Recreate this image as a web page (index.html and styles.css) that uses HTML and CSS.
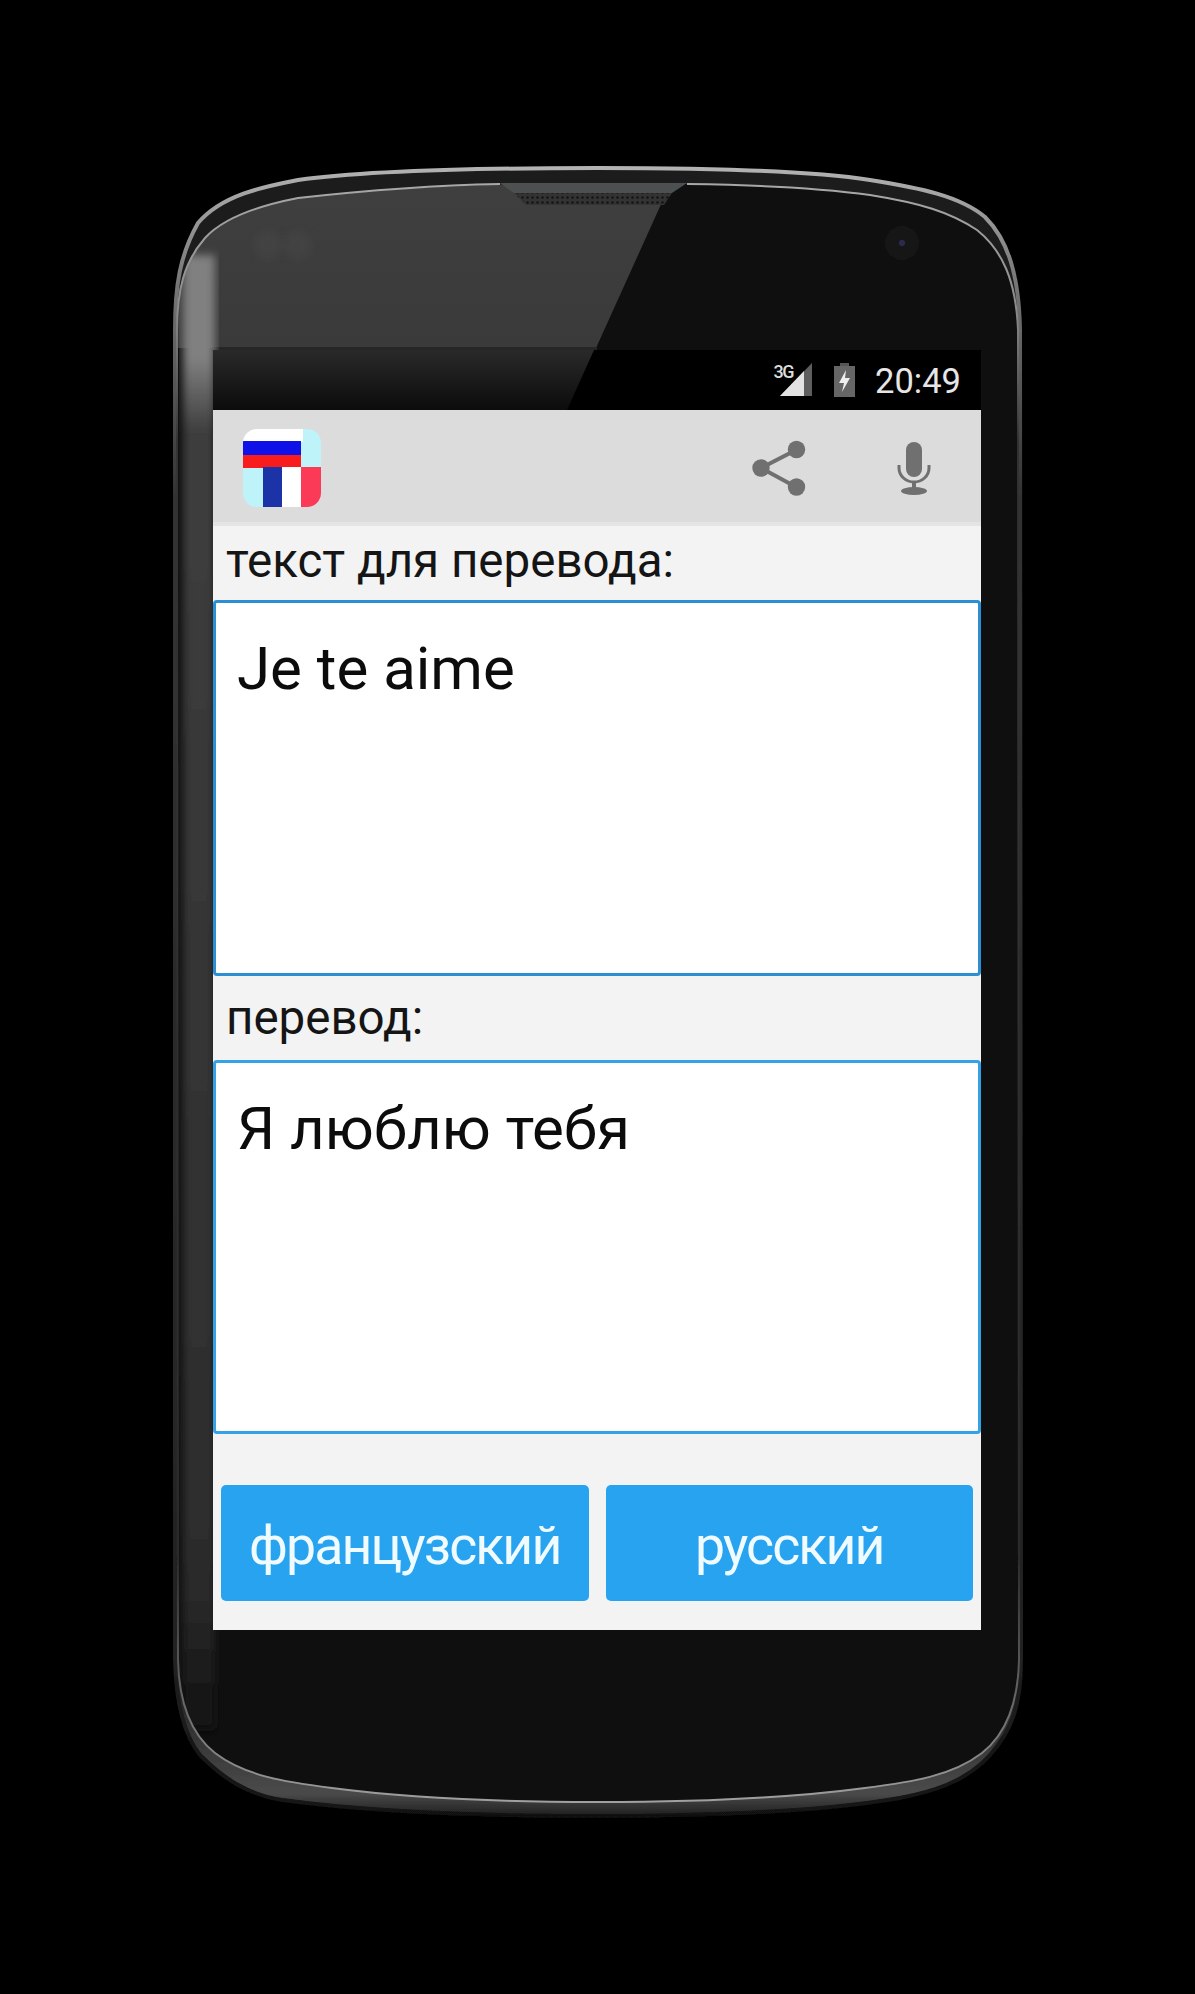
FILE: index.html
```html
<!DOCTYPE html>
<html lang="ru">
<head>
    <meta charset="UTF-8">
    <meta name="viewport" content="width=device-width, initial-scale=1.0">
    <title>Переводчик</title>
    <link rel="stylesheet" href="styles.css">
</head>
<body>
    <div class="phone">
        <!-- phone body, drawn behind the screen -->
        <svg class="phone-body" viewBox="0 0 1195 1994" width="1195" height="1994">
            <defs>
                <linearGradient id="bandFill" gradientUnits="userSpaceOnUse" x1="0" y1="165" x2="0" y2="1818">
                    <stop offset="0" stop-color="#1d1d1d"/>
                    <stop offset="0.9" stop-color="#161616"/>
                    <stop offset="0.985" stop-color="#4a4a4a"/>
                    <stop offset="1" stop-color="#1c1c1c"/>
                </linearGradient>
                <linearGradient id="edgeStroke" gradientUnits="userSpaceOnUse" x1="0" y1="165" x2="0" y2="1818">
                    <stop offset="0" stop-color="#b4b4b4"/>
                    <stop offset="0.07" stop-color="#777"/>
                    <stop offset="0.2" stop-color="#333"/>
                    <stop offset="0.9" stop-color="#222"/>
                    <stop offset="1" stop-color="#111"/>
                </linearGradient>
                <linearGradient id="glassStroke" gradientUnits="userSpaceOnUse" x1="0" y1="183" x2="0" y2="1802">
                    <stop offset="0" stop-color="#a8a8a8"/>
                    <stop offset="0.08" stop-color="#8a8a8a"/>
                    <stop offset="0.16" stop-color="#333"/>
                    <stop offset="0.85" stop-color="#2c2c2c"/>
                    <stop offset="0.95" stop-color="#707070"/>
                    <stop offset="1" stop-color="#a0a0a0"/>
                </linearGradient>
                <linearGradient id="glare" gradientUnits="userSpaceOnUse" x1="0" y1="183" x2="0" y2="348">
                    <stop offset="0" stop-color="#3f3f3f"/>
                    <stop offset="1" stop-color="#3a3a3a"/>
                </linearGradient>
                <linearGradient id="statusGlare" gradientUnits="userSpaceOnUse" x1="0" y1="350" x2="0" y2="410">
                    <stop offset="0" stop-color="#2a2a2a"/>
                    <stop offset="1" stop-color="#0c0c0c"/>
                </linearGradient>
                <linearGradient id="sideBand" gradientUnits="userSpaceOnUse" x1="0" y1="255" x2="0" y2="1730">
                    <stop offset="0" stop-color="#808080"/>
                    <stop offset="0.07" stop-color="#808080"/>
                    <stop offset="0.12" stop-color="#3e3e3e"/>
                    <stop offset="0.9" stop-color="#2c2c2c"/>
                    <stop offset="1" stop-color="#111"/>
                </linearGradient>
                <pattern id="mesh" width="5" height="5" patternUnits="userSpaceOnUse">
                    <rect width="5" height="5" fill="#333"/>
                    <circle cx="2.5" cy="2.5" r="1.3" fill="#141414"/>
                </pattern>
                <filter id="soft"><feGaussianBlur stdDeviation="0.7"/></filter>
                <filter id="wide"><feGaussianBlur stdDeviation="4"/></filter>
                <clipPath id="glassClip">
                    <path d="M177 330C177 290 184 262 205 238C225 216 262 205 298 198C370 190 480 183 598 183C720 183 820 188 870 195C920 203 950 212 977 230C1002 250 1016 280 1018 330L1019 1660C1018 1705 1005 1735 982 1753C952 1776 912 1782 865 1788C790 1798 700 1802 598 1802C480 1802 400 1797 332 1788C285 1782 245 1776 215 1753C192 1735 179 1705 178 1660Z"/>
                </clipPath>
            </defs>

            <path fill="url(#bandFill)" stroke="url(#edgeStroke)" stroke-width="4" filter="url(#soft)" d="M175 330C175 285 180 255 198 223C222 195 262 187 298 180C370 170 480 168 598 168C720 168 820 172 870 180C920 188 960 196 985 217C1008 240 1019 275 1020 330L1021 1660C1021 1705 1012 1730 990 1755C965 1783 930 1792 900 1798C820 1812 700 1816 598 1816C480 1816 370 1812 282 1800C245 1794 222 1777 200 1755C184 1735 176 1700 175 1660Z"/>

            <g clip-path="url(#glassClip)">
                <rect x="170" y="180" width="860" height="1630" fill="#0f0f0f"/>
                <polygon points="170,180 672,180 596,348 170,348" fill="url(#glare)"/>
                <rect x="213" y="347" width="384" height="3" fill="#262626"/>
                <rect x="183" y="255" width="32" height="1475" fill="url(#sideBand)" filter="url(#wide)"/>
                <rect x="213" y="350" width="768" height="60" fill="#000"/>
                <polygon points="213,350 594,350 567,410 213,410" fill="url(#statusGlare)"/>
                <circle cx="268" cy="245" r="15" fill="#464646" opacity="0.6" filter="url(#wide)"/>
                <circle cx="298" cy="245" r="15" fill="#464646" opacity="0.6" filter="url(#wide)"/>
                <circle cx="902" cy="243" r="17" fill="#161619" filter="url(#soft)"/>
                <circle cx="902" cy="243" r="3" fill="#2c2c50" filter="url(#soft)"/>
            </g>

            <path fill="none" stroke="url(#glassStroke)" stroke-width="2" filter="url(#soft)" d="M687 184C760 185 820 188 870 195C920 203 950 212 977 230C1002 250 1016 280 1018 330L1019 1660C1018 1705 1005 1735 982 1753C952 1776 912 1782 865 1788C790 1798 700 1802 598 1802C480 1802 400 1797 332 1788C285 1782 245 1776 215 1753C192 1735 179 1705 178 1660L177 330C177 290 184 262 205 238C225 216 262 205 298 198C370 190 450 185 500 184"/>

            <!-- speaker -->
            <polygon points="500,183 687,183 672,193 514,193" fill="#4c5050"/>
            <polygon points="514,193 672,193 664,205 526,205" fill="url(#mesh)"/>
        </svg>

        <div class="screen">
            <div class="status-bar">
                <span class="net-label">3G</span>
                <svg class="signal" width="33" height="34" viewBox="0 0 33 34">
                    <polygon points="0,33 32,0 32,33" fill="#5e5e5e"/>
                    <polygon points="0,33 24,8 24,33" fill="#e2e2e2"/>
                </svg>
                <svg class="battery" width="21" height="34" viewBox="0 0 21 34">
                    <rect x="6" y="0" width="9" height="3" fill="#555"/>
                    <rect x="0" y="3" width="21" height="31" fill="#666"/>
                    <polygon points="12,7 5,20 10,20 8,29 16,15 11,15" fill="#eee"/>
                </svg>
                <span class="clock">20:49</span>
            </div>

            <div class="action-bar">
                <svg class="app-logo" width="78" height="78" viewBox="0 0 78 78">
                    <defs>
                        <clipPath id="logoClip"><rect width="78" height="78" rx="14"/></clipPath>
                    </defs>
                    <g clip-path="url(#logoClip)">
                        <rect width="78" height="78" fill="#bff3fa"/>
                        <rect width="60" height="13" fill="#fff"/>
                        <rect y="12" width="58" height="14" fill="#1010e8"/>
                        <rect y="26" width="58" height="13" fill="#f81c1c"/>
                        <rect x="20" y="38" width="19" height="40" fill="#1c33a8"/>
                        <rect x="39" y="38" width="19" height="40" fill="#fff"/>
                        <rect x="58" y="38" width="20" height="40" fill="#fb3a58"/>
                    </g>
                </svg>
                <div class="action-icons">
                    <svg width="54" height="56" viewBox="0 0 54 56">
                        <path d="M44 10L9 28L44 47" fill="none" stroke="#707070" stroke-width="4"/>
                        <circle cx="44.5" cy="9.5" r="8.7" fill="#707070"/>
                        <circle cx="9" cy="28" r="8.7" fill="#707070"/>
                        <circle cx="44.5" cy="47" r="8.7" fill="#707070"/>
                    </svg>
                    <svg width="34" height="54" viewBox="0 0 34 54">
                        <rect x="9" y="1" width="16" height="35" rx="8" fill="#707070"/>
                        <path d="M2 24V27C2 35 9 41 17 41C25 41 32 35 32 27V24" fill="none" stroke="#707070" stroke-width="3"/>
                        <rect x="15" y="41" width="4" height="8" fill="#707070"/>
                        <ellipse cx="17" cy="50" rx="13" ry="4" fill="#707070"/>
                    </svg>
                </div>
            </div>

            <div class="field-label first">текст для перевода:</div>
            <div class="text-box source">Je te aime</div>
            <div class="field-label second">перевод:</div>
            <div class="text-box result">Я люблю тебя</div>

            <div class="lang-buttons">
                <div class="lang-button">французский</div>
                <div class="lang-button">русский</div>
            </div>
        </div>
    </div>
</body>
</html>
```

FILE: styles.css
```css
html, body {
    margin: 0;
    background-color: #000;
}
body {
    font-family: Roboto, "Liberation Sans", sans-serif;
}
.phone {
    position: relative;
    box-sizing: border-box;
    width: 1195px;
    height: 1994px;
    padding: 350px 214px 0 213px;
    overflow: hidden;
}
.phone-body {
    position: absolute;
    top: 0;
    left: 0;
}
.screen {
    position: relative;
    display: flex;
    flex-direction: column;
    height: 1280px;
    background: linear-gradient(transparent 60px, #f3f3f3 60px);
}
.status-bar {
    display: flex;
    align-items: flex-start;
    height: 60px;
    padding-right: 20px;
    justify-content: flex-end;
    color: #e6e6e6;
}
.net-label {
    margin: 12px -13px 0 0;
    font-size: 18px;
    font-weight: 500;
    line-height: 20px;
    letter-spacing: -1.5px;
    color: #ddd;
}
.signal {
    margin: 13px 21px 0 0;
}
.battery {
    margin: 13px 20px 0 0;
}
.clock {
    margin-top: 11px;
    font-size: 34.5px;
    line-height: 40px;
}
.action-bar {
    display: flex;
    align-items: center;
    justify-content: space-between;
    box-sizing: border-box;
    height: 116px;
    padding: 4px 50px 0 30px;
    background-color: #dcdcdc;
    border-bottom: 4px solid #e4e4e4;
}
.action-icons {
    display: flex;
    align-items: center;
    gap: 91px;
}
.field-label {
    padding-left: 13px;
    font-size: 47.5px;
    color: #151515;
}
.field-label.first {
    height: 74px;
    line-height: 70px;
}
.field-label.second {
    height: 84px;
    line-height: 84px;
}
.text-box {
    box-sizing: border-box;
    padding: 26px 0 0 21px;
    font-size: 60px;
    line-height: 80px;
    color: #0c0c0c;
    background-color: #fff;
    border-radius: 4px;
}
.text-box.source {
    height: 376px;
    border: 3px solid #2b8fd2;
}
.text-box.result {
    height: 374px;
    border: 3px solid #35a2e6;
}
.lang-buttons {
    display: flex;
    gap: 17px;
    padding: 51px 8px 0;
}
.lang-button {
    flex: 1;
    height: 116px;
    font-size: 53.6px;
    line-height: 122px;
    letter-spacing: -1.9px;
    text-align: center;
    color: #f0fbff;
    background-color: #27a3ef;
    border-radius: 5px;
}
```
